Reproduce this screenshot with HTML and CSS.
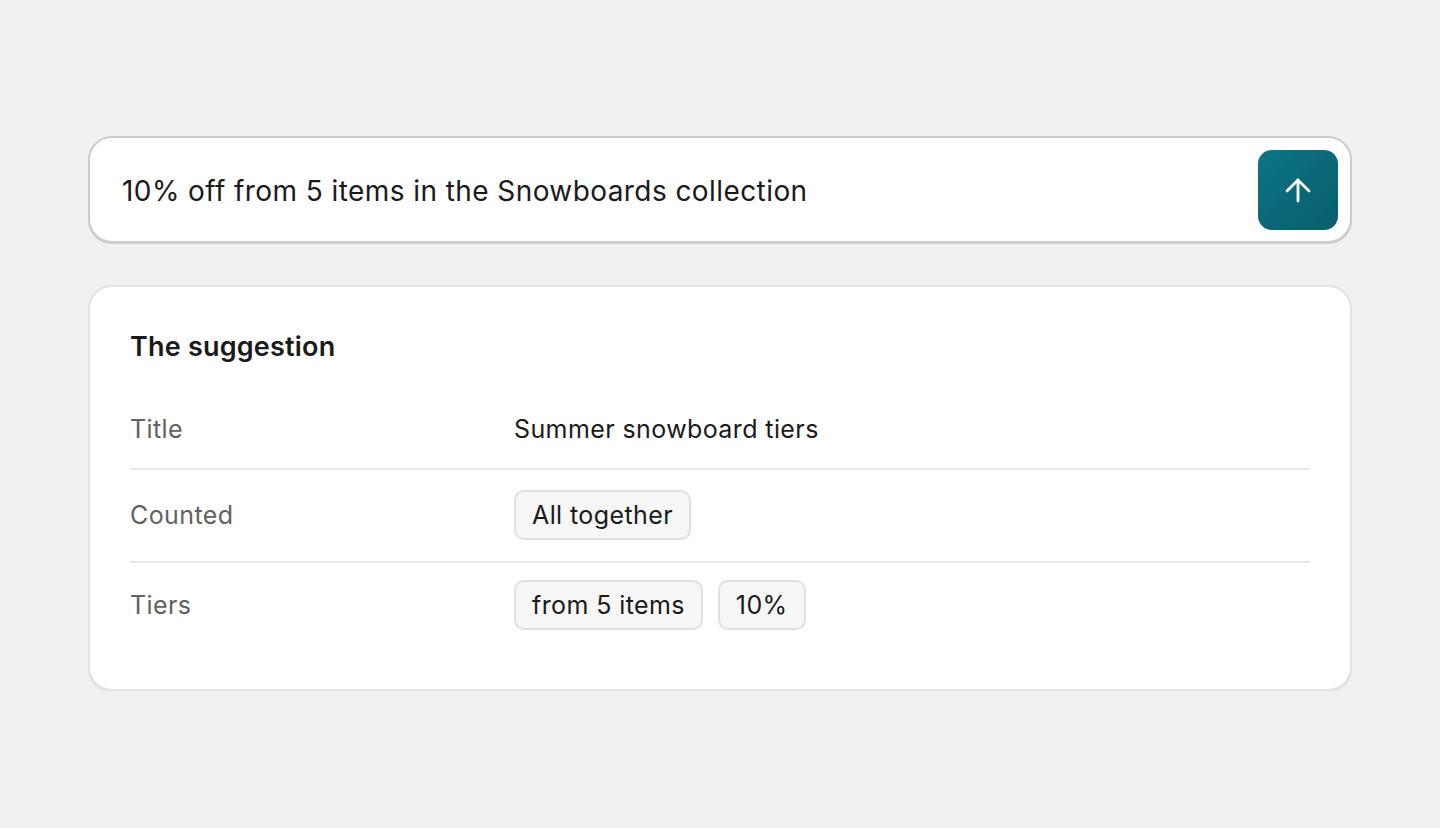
FILE: index.html
```html
<!DOCTYPE html>
<html lang="en">
<head>
    <meta charset="UTF-8">
    <meta name="viewport" content="width=device-width, initial-scale=1.0">
    <title>Discount suggestion</title>
    <link rel="stylesheet" href="styles.css">
</head>
<body>

<div class="page">
    <div class="prompt-box">
        <div class="prompt-text">10% off from 5 items in the Snowboards collection</div>
        <button class="send-btn" aria-label="Send">
            <svg width="28" height="28" viewBox="0 0 28 28" fill="none" stroke="#fff" stroke-width="2.8" stroke-linecap="round" stroke-linejoin="round">
                <path d="M14 4V25"/>
                <path d="M3 15L14 4L25 15"/>
            </svg>
        </button>
    </div>

    <div class="suggestion-card">
        <h2 class="card-title">The suggestion</h2>
        <div class="row">
            <div class="row-label">Title</div>
            <div class="row-value">Summer snowboard tiers</div>
        </div>
        <div class="row">
            <div class="row-label">Counted</div>
            <div class="row-value">
                <span class="chip">All together</span>
            </div>
        </div>
        <div class="row">
            <div class="row-label">Tiers</div>
            <div class="row-value">
                <span class="chip">from 5 items</span>
                <span class="chip">10%</span>
            </div>
        </div>
    </div>
</div>

</body>
</html>
```

FILE: styles.css
```css
:root {
    --bg: #f1f1f1;
    --text: #1a1a1a;
    --muted: #616161;
    --line: #e3e3e3;
}

body {
    margin: 0;
    background: var(--bg);
    font-family: Inter, "Noto Sans", sans-serif;
    color: var(--text);
}

.page {
    width: 1264px;
    margin: 0 auto;
    padding-top: 136px;
}

.prompt-box {
    display: flex;
    align-items: center;
    justify-content: space-between;
    height: 103px;
    padding: 0 12px 0 32px;
    background: #fff;
    border: 2px solid #cccccc;
    border-radius: 24px;
    box-shadow: 0 1px 0 #cccccc;
}

.prompt-text {
    font-size: 28px;
    letter-spacing: 0.42px;
    padding-top: 3px;
}

.send-btn {
    width: 80px;
    height: 80px;
    border: none;
    border-radius: 14px;
    background: linear-gradient(135deg, #0d7584, #085d6b);
    display: flex;
    align-items: center;
    justify-content: center;
    cursor: pointer;
}

.suggestion-card {
    margin-top: 42px;
    padding: 42px 40px 38px;
    background: #fff;
    border: 2px solid var(--line);
    border-radius: 24px;
    box-shadow: 0 2px 0 var(--line);
}

.card-title {
    margin: 0 0 26px;
    font-size: 27px;
    line-height: 36px;
    font-weight: 600;
    letter-spacing: 0.2px;
}

.row {
    display: flex;
    align-items: center;
    padding: 20px 0 21px;
    border-bottom: 2px solid #e8e8e8;
}

.row:last-child {
    padding-top: 17px;
    border-bottom: none;
}

.row-label {
    width: 384px;
    flex-shrink: 0;
    font-size: 25px;
    line-height: 36px;
    letter-spacing: 0.4px;
    color: var(--muted);
}

.row-value {
    display: flex;
    gap: 15px;
    font-size: 25px;
    line-height: 36px;
    letter-spacing: 0.4px;
}

.chip {
    display: inline-flex;
    align-items: center;
    box-sizing: border-box;
    height: 50px;
    padding: 0 16px;
    background: #f6f6f6;
    border: 2px solid #e0e0e0;
    border-radius: 10px;
}
```
